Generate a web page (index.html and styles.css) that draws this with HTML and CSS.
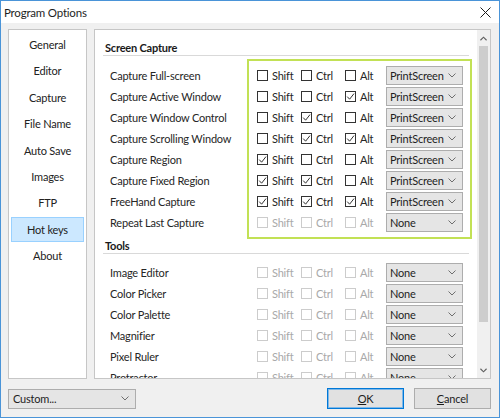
FILE: index.html
```html
<!DOCTYPE html>
<html>
<head>
<meta charset="utf-8">
<link rel="stylesheet" href="styles.css">
</head>
<body>
<div class="window">
  <div class="titlebar">
    <span class="title">Program Options</span>
    <svg class="close" viewBox="0 0 11 11"><path d="M0.5 0.5 L10.5 10.5 M10.5 0.5 L0.5 10.5" stroke="#1a1a1a" stroke-width="1" fill="none"/></svg>
  </div>
  <div class="client">
    <div class="panels">
      <nav class="sidebar">
        <div class="nav-item">General</div>
        <div class="nav-item">Editor</div>
        <div class="nav-item">Capture</div>
        <div class="nav-item">File Name</div>
        <div class="nav-item">Auto Save</div>
        <div class="nav-item">Images</div>
        <div class="nav-item">FTP</div>
        <div class="nav-item active">Hot keys</div>
        <div class="nav-item">About</div>
      </nav>
      <div class="main">
        <div class="content">
          <section class="group first">
            <div class="group-title">Screen Capture</div>
            <div class="group-body">
              <div class="labels">
                <div class="label">Capture Full-screen</div>
                <div class="label">Capture Active Window</div>
                <div class="label">Capture Window Control</div>
                <div class="label">Capture Scrolling Window</div>
                <div class="label">Capture Region</div>
                <div class="label">Capture Fixed Region</div>
                <div class="label">FreeHand Capture</div>
                <div class="label">Repeat Last Capture</div>
              </div>
              <div class="controls highlight">
                <div class="row">
                  <span class="check"><span class="box"></span>Shift</span>
                  <span class="check"><span class="box"></span>Ctrl</span>
                  <span class="check"><span class="box"></span>Alt</span>
                  <span class="select"><span>PrintScreen</span><svg class="chev" viewBox="0 0 8 5"><path d="M0.5 0.5 L4 4 L7.5 0.5" stroke="#6e6e6e" fill="none"/></svg></span>
                </div>
                <div class="row">
                  <span class="check"><span class="box"></span>Shift</span>
                  <span class="check"><span class="box"></span>Ctrl</span>
                  <span class="check"><span class="box"><svg viewBox="0 0 9 9"><path d="M1.2 4.6 L3.6 7.2 L8 1.6" stroke="#333" fill="none"/></svg></span>Alt</span>
                  <span class="select"><span>PrintScreen</span><svg class="chev" viewBox="0 0 8 5"><path d="M0.5 0.5 L4 4 L7.5 0.5" stroke="#6e6e6e" fill="none"/></svg></span>
                </div>
                <div class="row">
                  <span class="check"><span class="box"></span>Shift</span>
                  <span class="check"><span class="box"><svg viewBox="0 0 9 9"><path d="M1.2 4.6 L3.6 7.2 L8 1.6" stroke="#333" fill="none"/></svg></span>Ctrl</span>
                  <span class="check"><span class="box"></span>Alt</span>
                  <span class="select"><span>PrintScreen</span><svg class="chev" viewBox="0 0 8 5"><path d="M0.5 0.5 L4 4 L7.5 0.5" stroke="#6e6e6e" fill="none"/></svg></span>
                </div>
                <div class="row">
                  <span class="check"><span class="box"></span>Shift</span>
                  <span class="check"><span class="box"><svg viewBox="0 0 9 9"><path d="M1.2 4.6 L3.6 7.2 L8 1.6" stroke="#333" fill="none"/></svg></span>Ctrl</span>
                  <span class="check"><span class="box"><svg viewBox="0 0 9 9"><path d="M1.2 4.6 L3.6 7.2 L8 1.6" stroke="#333" fill="none"/></svg></span>Alt</span>
                  <span class="select"><span>PrintScreen</span><svg class="chev" viewBox="0 0 8 5"><path d="M0.5 0.5 L4 4 L7.5 0.5" stroke="#6e6e6e" fill="none"/></svg></span>
                </div>
                <div class="row">
                  <span class="check"><span class="box"><svg viewBox="0 0 9 9"><path d="M1.2 4.6 L3.6 7.2 L8 1.6" stroke="#333" fill="none"/></svg></span>Shift</span>
                  <span class="check"><span class="box"></span>Ctrl</span>
                  <span class="check"><span class="box"></span>Alt</span>
                  <span class="select"><span>PrintScreen</span><svg class="chev" viewBox="0 0 8 5"><path d="M0.5 0.5 L4 4 L7.5 0.5" stroke="#6e6e6e" fill="none"/></svg></span>
                </div>
                <div class="row">
                  <span class="check"><span class="box"><svg viewBox="0 0 9 9"><path d="M1.2 4.6 L3.6 7.2 L8 1.6" stroke="#333" fill="none"/></svg></span>Shift</span>
                  <span class="check"><span class="box"><svg viewBox="0 0 9 9"><path d="M1.2 4.6 L3.6 7.2 L8 1.6" stroke="#333" fill="none"/></svg></span>Ctrl</span>
                  <span class="check"><span class="box"></span>Alt</span>
                  <span class="select"><span>PrintScreen</span><svg class="chev" viewBox="0 0 8 5"><path d="M0.5 0.5 L4 4 L7.5 0.5" stroke="#6e6e6e" fill="none"/></svg></span>
                </div>
                <div class="row">
                  <span class="check"><span class="box"><svg viewBox="0 0 9 9"><path d="M1.2 4.6 L3.6 7.2 L8 1.6" stroke="#333" fill="none"/></svg></span>Shift</span>
                  <span class="check"><span class="box"><svg viewBox="0 0 9 9"><path d="M1.2 4.6 L3.6 7.2 L8 1.6" stroke="#333" fill="none"/></svg></span>Ctrl</span>
                  <span class="check"><span class="box"><svg viewBox="0 0 9 9"><path d="M1.2 4.6 L3.6 7.2 L8 1.6" stroke="#333" fill="none"/></svg></span>Alt</span>
                  <span class="select"><span>PrintScreen</span><svg class="chev" viewBox="0 0 8 5"><path d="M0.5 0.5 L4 4 L7.5 0.5" stroke="#6e6e6e" fill="none"/></svg></span>
                </div>
                <div class="row disabled">
                  <span class="check"><span class="box"></span>Shift</span>
                  <span class="check"><span class="box"></span>Ctrl</span>
                  <span class="check"><span class="box"></span>Alt</span>
                  <span class="select"><span>None</span><svg class="chev" viewBox="0 0 8 5"><path d="M0.5 0.5 L4 4 L7.5 0.5" stroke="#6e6e6e" fill="none"/></svg></span>
                </div>
              </div>
            </div>
          </section>
          <section class="group">
            <div class="group-title">Tools</div>
            <div class="group-body tools">
              <div class="labels">
                <div class="label">Image Editor</div>
                <div class="label">Color Picker</div>
                <div class="label">Color Palette</div>
                <div class="label">Magnifier</div>
                <div class="label">Pixel Ruler</div>
                <div class="label">Protractor</div>
              </div>
              <div class="controls plain">
                <div class="row disabled"><span class="check"><span class="box"></span>Shift</span><span class="check"><span class="box"></span>Ctrl</span><span class="check"><span class="box"></span>Alt</span><span class="select"><span>None</span><svg class="chev" viewBox="0 0 8 5"><path d="M0.5 0.5 L4 4 L7.5 0.5" stroke="#6e6e6e" fill="none"/></svg></span></div>
                <div class="row disabled"><span class="check"><span class="box"></span>Shift</span><span class="check"><span class="box"></span>Ctrl</span><span class="check"><span class="box"></span>Alt</span><span class="select"><span>None</span><svg class="chev" viewBox="0 0 8 5"><path d="M0.5 0.5 L4 4 L7.5 0.5" stroke="#6e6e6e" fill="none"/></svg></span></div>
                <div class="row disabled"><span class="check"><span class="box"></span>Shift</span><span class="check"><span class="box"></span>Ctrl</span><span class="check"><span class="box"></span>Alt</span><span class="select"><span>None</span><svg class="chev" viewBox="0 0 8 5"><path d="M0.5 0.5 L4 4 L7.5 0.5" stroke="#6e6e6e" fill="none"/></svg></span></div>
                <div class="row disabled"><span class="check"><span class="box"></span>Shift</span><span class="check"><span class="box"></span>Ctrl</span><span class="check"><span class="box"></span>Alt</span><span class="select"><span>None</span><svg class="chev" viewBox="0 0 8 5"><path d="M0.5 0.5 L4 4 L7.5 0.5" stroke="#6e6e6e" fill="none"/></svg></span></div>
                <div class="row disabled"><span class="check"><span class="box"></span>Shift</span><span class="check"><span class="box"></span>Ctrl</span><span class="check"><span class="box"></span>Alt</span><span class="select"><span>None</span><svg class="chev" viewBox="0 0 8 5"><path d="M0.5 0.5 L4 4 L7.5 0.5" stroke="#6e6e6e" fill="none"/></svg></span></div>
                <div class="row disabled"><span class="check"><span class="box"></span>Shift</span><span class="check"><span class="box"></span>Ctrl</span><span class="check"><span class="box"></span>Alt</span><span class="select"><span>None</span><svg class="chev" viewBox="0 0 8 5"><path d="M0.5 0.5 L4 4 L7.5 0.5" stroke="#6e6e6e" fill="none"/></svg></span></div>
              </div>
            </div>
          </section>
        </div>
        <div class="scrollbar">
          <div class="sb-arrow"><svg viewBox="0 0 8 5"><path d="M0.5 4.5 L4 1 L7.5 4.5" stroke="#606060" stroke-width="1.3" fill="none"/></svg></div>
          <div class="sb-thumb"></div>
          <div class="sb-track"></div>
          <div class="sb-arrow"><svg viewBox="0 0 8 5"><path d="M0.5 0.5 L4 4 L7.5 0.5" stroke="#606060" stroke-width="1.3" fill="none"/></svg></div>
        </div>
      </div>
    </div>
    <div class="footer">
      <span class="select custom"><span>Custom...</span><svg class="chev" viewBox="0 0 8 5"><path d="M0.5 0.5 L4 4 L7.5 0.5" stroke="#6e6e6e" fill="none"/></svg></span>
      <div class="buttons">
        <button class="btn default"><u>O</u>K</button>
        <button class="btn"><u>C</u>ancel</button>
      </div>
    </div>
  </div>
</div>
</body>
</html>
```

FILE: styles.css
```css
* { box-sizing: border-box; }
html, body { margin: 0; padding: 0; }
body {
  width: 500px;
  height: 418px;
  overflow: hidden;
  font-family: Lato, "Noto Sans", sans-serif;
  font-size: 11px;
  letter-spacing: -0.2px;
  color: #1e1e1e;
  background: #ffffff;
}
.window {
  width: 500px;
  height: 418px;
  border: 1px solid #4a94d8;
  display: flex;
  flex-direction: column;
  background: #f0f0f0;
}
.titlebar {
  height: 22px;
  flex: none;
  background: #ffffff;
  display: flex;
  align-items: center;
  justify-content: space-between;
  padding: 0 8px 0 3px;
}
.title { font-size: 11.5px; color: #1e1e1e; }
.close { width: 11px; height: 11px; }
.client {
  flex: 1;
  display: flex;
  flex-direction: column;
  padding: 6px 8px 8px 7px;
}
.panels {
  height: 350px;
  flex: none;
  display: flex;
  gap: 7px;
}
.sidebar {
  width: 79px;
  flex: none;
  background: #ffffff;
  border: 1px solid #c6c6c6;
  padding: 2px 2px 0;
  display: flex;
  flex-direction: column;
  gap: 1.4px;
}
.nav-item {
  height: 25px;
  flex: none;
  display: flex;
  align-items: center;
  justify-content: center;
  border: 1px solid transparent;
  color: #222;
}
.nav-item.active {
  background: #cce8ff;
  border-color: #99d1ff;
}
.main {
  flex: 1;
  background: #ffffff;
  border: 1px solid #c6c6c6;
  display: flex;
  overflow: hidden;
}
.content {
  flex: 1;
  overflow: hidden;
}
.group.first { padding-top: 11px; }
.group-title {
  margin: 0 8px;
  padding-left: 2px;
  height: 15px;
  line-height: 14px;
  font-weight: bold;
  color: #1a1a1a;
  border-bottom: 1px solid #d9d9d9;
}
.group-body {
  display: flex;
  margin-top: 3px;
}
.group-body.tools { margin-top: 2px; }
.labels {
  width: 152px;
  flex: none;
  padding: 6px 0 0 15px;
}
.label {
  height: 21px;
  display: flex;
  align-items: center;
  white-space: nowrap;
  color: #262626;
}
.controls {
  width: 225px;
  flex: none;
  border: 2px solid #c2e155;
  padding: 4px 7px 4px 8px;
}
.controls.plain { border-color: transparent; }
.row {
  height: 21px;
  display: grid;
  grid-template-columns: 44px 44px 41px 77px;
  align-items: center;
}
.check {
  display: flex;
  align-items: center;
  gap: 4px;
  color: #262626;
}
.box {
  width: 11px;
  height: 11px;
  flex: none;
  border: 1px solid #333333;
  background: #ffffff;
  display: flex;
}
.box svg { width: 9px; height: 9px; }
.row.disabled .check { color: #a9a9a9; }
.row.disabled .box { border-color: #cccccc; }
.select {
  height: 19px;
  border: 1px solid #adadad;
  background: #e5e5e5;
  display: flex;
  align-items: center;
  justify-content: space-between;
  padding: 0 6px 0 3px;
  color: #1e1e1e;
}
.chev { width: 8px; height: 5px; }
.scrollbar {
  width: 13px;
  flex: none;
  background: #f0f0f0;
  display: flex;
  flex-direction: column;
}
.sb-arrow {
  height: 16px;
  flex: none;
  display: flex;
  align-items: center;
  justify-content: center;
}
.sb-arrow svg { width: 7px; height: 5px; }
.sb-thumb {
  height: 276px;
  flex: none;
  margin: 0 2px;
  background: #cdcdcd;
}
.sb-track { flex: 1; }
.footer {
  margin-top: 9px;
  height: 21px;
  display: flex;
  align-items: center;
  justify-content: space-between;
}
.select.custom {
  width: 128px;
  height: 20px;
  padding: 0 6px 0 4px;
}
.buttons {
  display: flex;
  gap: 10px;
}
.btn {
  width: 77px;
  height: 21px;
  border: 1px solid #adadad;
  background: #e1e1e1;
  font-family: Lato, "Noto Sans", sans-serif;
  font-size: 11px;
  letter-spacing: -0.2px;
  color: #1e1e1e;
  padding: 0;
}
.btn.default {
  border-color: #0078d7;
  box-shadow: inset 0 0 0 1px #7fb8e8;
}
```
